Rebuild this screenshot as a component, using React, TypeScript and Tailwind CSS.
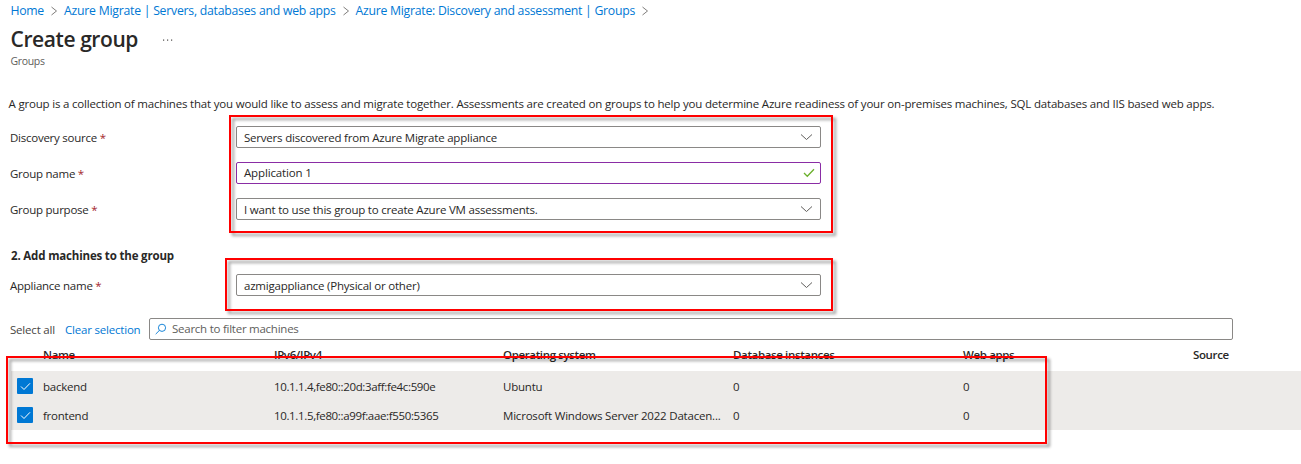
import type { ReactNode } from "react";

const crumbs = [
  { label: "Home", width: "w-[33.5px]", tracking: "tracking-[-0.35px]" },
  { label: "Azure Migrate | Servers, databases and web apps", width: "w-[271.5px]", tracking: "tracking-[-0.24px]" },
  { label: "Azure Migrate: Discovery and assessment | Groups", width: "w-[279.5px]", tracking: "tracking-[-0.26px]" },
];

const machines = [
  { name: "backend", ip: "10.1.1.4,fe80::20d:3aff:fe4c:590e", os: "Ubuntu", db: 0, web: 0 },
  { name: "frontend", ip: "10.1.1.5,fe80::a99f:aae:f550:5365", os: "Microsoft Windows Server 2022 Datacen...", db: 0, web: 0 },
];

function CrumbArrow() {
  return (
    <svg width="20" height="12" viewBox="0 0 20 12" fill="none" stroke="#807e7c" strokeWidth="1" className="shrink-0">
      <path d="M7.5 2l5 4-5 4" />
    </svg>
  );
}

function Chevron() {
  return (
    <svg width="13" height="8" viewBox="0 0 13 8" fill="none" stroke="#605e5c" strokeWidth="1">
      <path d="M1 1.5l5.5 5L12 1.5" />
    </svg>
  );
}

function ValidMark() {
  return (
    <svg width="12" height="10" viewBox="0 0 12 10" fill="none" stroke="#6bb02c" strokeWidth="1.3">
      <path d="M1 5l3.3 3.3L11 1.3" />
    </svg>
  );
}

function CheckedBox() {
  return (
    <span className="flex h-4 w-4 items-center justify-center rounded-[1px] bg-[#0078d4]">
      <svg width="11" height="9" viewBox="0 0 11 9" fill="none" stroke="#fff" strokeWidth="1">
        <path d="M1 4.5l3 3L10 1.3" />
      </svg>
    </span>
  );
}

function Field({ label, value, valid = false, icon }: { label: string; value: string; valid?: boolean; icon: ReactNode }) {
  return (
    <div className="flex h-[22px] items-center">
      <label className="w-[226px] shrink-0 pt-px">
        {label} <span className="text-[#a4262c]">*</span>
      </label>
      <div
        className={`flex h-[22px] w-[585px] items-center justify-between rounded-[2px] border pl-[7px] ${
          valid ? "border-[#8a2da5] pr-[5px] pb-px" : "border-[#8a8886] pr-[7px]"
        }`}
      >
        <span className={valid ? "tracking-[-0.15px]" : "pt-[2px] tracking-[-0.21px]"}>{value}</span>
        {icon}
      </div>
    </div>
  );
}

export default function App() {
  return (
    <div className="relative h-[464px] w-[1301px] overflow-hidden bg-white font-['Open_Sans','Noto_Sans',sans-serif] text-[11.5px] leading-4 tracking-[-0.25px] whitespace-nowrap text-[#292827]">
      <nav className="flex h-[21px] items-center pl-[10.5px] text-[12.25px] text-[#0078d4]">
        {crumbs.map((c) => (
          <div key={c.label} className="flex items-center">
            <a className={`${c.width} ${c.tracking}`}>{c.label}</a>
            <CrumbArrow />
          </div>
        ))}
      </nav>

      <header className="pl-[10.5px]">
        <div className="flex h-[36px] items-center">
          <h1 className="w-[151px] text-[21px] leading-7 font-semibold tracking-[-0.41px]">Create group</h1>
          <svg width="12" height="4" viewBox="0 0 12 4" fill="#4a4846" className="mt-[2px]">
            <rect x="1" y="1.5" width="1.2" height="1.2" />
            <rect x="5" y="1.5" width="1.2" height="1.2" />
            <rect x="9" y="1.5" width="1.2" height="1.2" />
          </svg>
        </div>
        <p className="h-[39px] text-[10.5px] leading-[9px] tracking-[-0.34px] text-[#605e5c]">Groups</p>
      </header>

      <p className="h-[30px] pl-[8.5px] tracking-[-0.188px]">
        A group is a collection of machines that you would like to assess and migrate together. Assessments are created on
        groups to help you determine Azure readiness of your on-premises machines, SQL databases and IIS based web apps.
      </p>

      <div className="flex flex-col gap-[14px] pl-[10px]">
        <Field label="Discovery source" value="Servers discovered from Azure Migrate appliance" icon={<Chevron />} />
        <Field label="Group name" value="Application 1" valid icon={<ValidMark />} />
        <Field label="Group purpose" value="I want to use this group to create Azure VM assessments." icon={<Chevron />} />
      </div>

      <div className="pt-7 pl-[10px]">
        <h2 className="h-[26px] pl-px font-bold tracking-[-0.17px]">2. Add machines to the group</h2>
        <Field label="Appliance name" value="azmigappliance (Physical or other)" icon={<Chevron />} />
      </div>

      <div className="flex items-center pt-[22px] pl-[10px]">
        <span className="w-[55px] pt-px tracking-[-0.2px] text-[#484644]">Select all</span>
        <a className="w-[84px] pt-px tracking-[-0.2px] text-[#0078d4]">Clear selection</a>
        <div className="flex h-[22px] w-[1084px] items-center rounded-[2px] border border-[#8a8886] pl-[5px] text-[#605e5c]">
          <svg width="12" height="12" viewBox="0 0 12 12" fill="none" stroke="#0078d4" strokeWidth="0.9" className="mr-[5px]">
            <circle cx="7" cy="4.8" r="3.6" />
            <path d="M4.3 7.5L.7 11.1" />
          </svg>
          Search to filter machines
        </div>
      </div>

      <div className="ml-[11px]">
        <div className="grid h-[31px] grid-cols-[32px_231px_229px_230px_230px_1fr] pt-[7px] font-semibold tracking-[-0.36px]">
          <span />
          <span>Name</span>
          <span>IPv6/IPv4</span>
          <span>Operating system</span>
          <span>Database instances</span>
          <div className="flex">
            <span className="w-[230px]">Web apps</span>
            <span>Source</span>
          </div>
        </div>
        <div className="bg-[#edebe9] pb-px">
          {machines.map((m) => (
            <div key={m.name} className="grid h-[29px] grid-cols-[32px_231px_229px_230px_230px_1fr] items-center pt-[3px]">
              <span className="-mt-[2px] pl-[6px]">
                <CheckedBox />
              </span>
              <span>{m.name}</span>
              <span className="tracking-[-0.35px]">{m.ip}</span>
              <span className="tracking-[-0.2px]">{m.os}</span>
              <span>{m.db}</span>
              <span>{m.web}</span>
            </div>
          ))}
        </div>
      </div>

      <div className="pointer-events-none absolute top-[115px] left-[229px] h-[118px] w-[604px] border-2 border-[#ff0000] drop-shadow-[3px_3px_1.5px_rgba(0,0,0,0.4)]" />
      <div className="pointer-events-none absolute top-[258px] left-[225px] h-[53px] w-[608px] border-2 border-[#ff0000] drop-shadow-[3px_3px_1.5px_rgba(0,0,0,0.4)]" />
      <div className="pointer-events-none absolute top-[356px] left-[6px] h-[88px] w-[1041px] border-2 border-[#ff0000] drop-shadow-[3px_3px_1.5px_rgba(0,0,0,0.4)]" />
    </div>
  );
}
